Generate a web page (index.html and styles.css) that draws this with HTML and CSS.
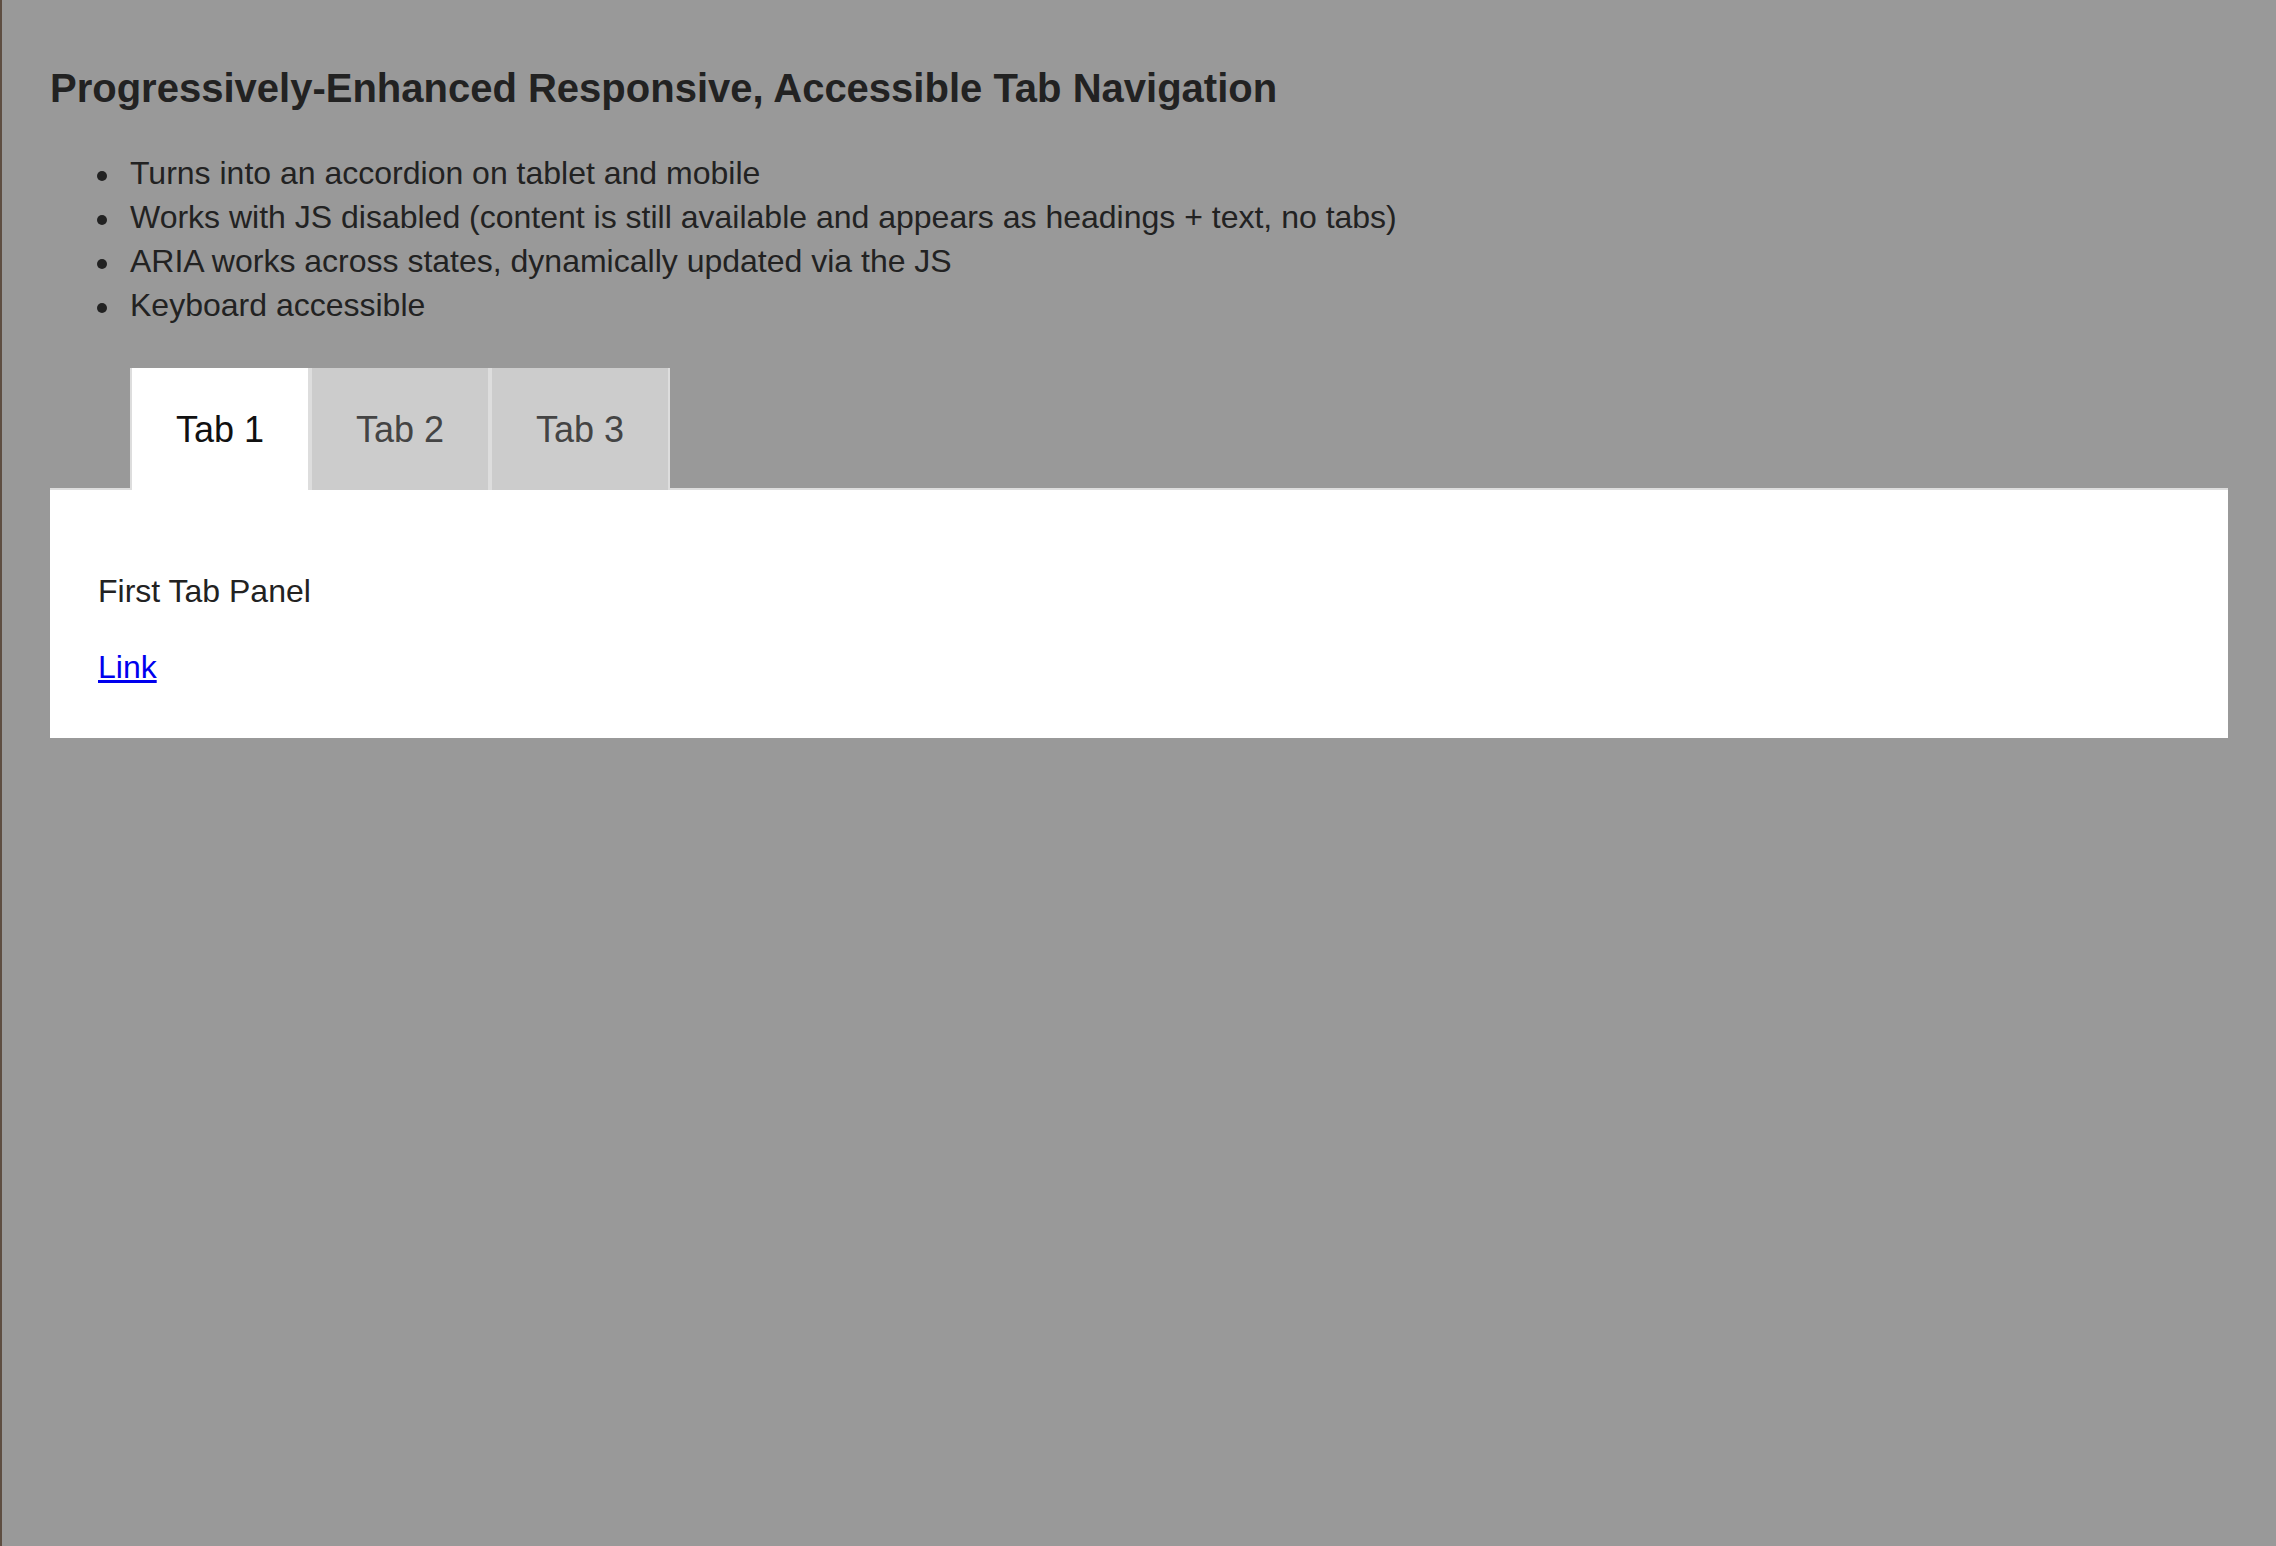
FILE: index.html
```html
<!DOCTYPE html>
<html lang="en">
<head>
<meta charset="utf-8">
<title>Progressively-Enhanced Responsive, Accessible Tab Navigation</title>
<link rel="stylesheet" href="styles.css">
</head>
<body class="page">
<main class="wrap">
  <h1 class="title">Progressively-Enhanced Responsive, Accessible Tab Navigation</h1>
  <ul class="features">
    <li class="feature">Turns into an accordion on tablet and mobile</li>
    <li class="feature">Works with JS disabled (content is still available and appears as headings + text, no tabs)</li>
    <li class="feature">ARIA works across states, dynamically updated via the JS</li>
    <li class="feature">Keyboard accessible</li>
  </ul>
  <div class="tabs">
    <div class="tablist" role="tablist">
      <a class="tab is-active" role="tab" aria-selected="true" href="#tab1">Tab 1</a>
      <a class="tab" role="tab" aria-selected="false" href="#tab2">Tab 2</a>
      <a class="tab" role="tab" aria-selected="false" href="#tab3">Tab 3</a>
    </div>
    <section class="panel" id="tab1" role="tabpanel">
      <p class="panel-text">First Tab Panel</p>
      <p class="panel-text"><a class="link" href="#">Link</a></p>
    </section>
  </div>
</main>
</body>
</html>
```

FILE: styles.css
```css
html, body {
  margin: 0;
  padding: 0;
}

.page {
  min-height: 1546px;
  box-sizing: border-box;
  background: #999999;
  border-left: 2px solid #5e4e42;
  font-family: "Liberation Sans", Arial, Helvetica, sans-serif;
  color: #222222;
}

.wrap {
  padding: 65px 48px 0 48px;
}

.title {
  margin: 0;
  font-size: 40px;
  line-height: 46px;
  font-weight: bold;
  color: #222222;
}

.features {
  margin: 40px 0 0 0;
  padding-left: 80px;
  list-style: none;
  font-size: 32px;
  line-height: 44px;
  color: #222222;
}

.feature::before {
  content: "";
  display: inline-block;
  width: 10px;
  height: 10px;
  border-radius: 50%;
  background: #222222;
  margin-left: -33px;
  margin-right: 23px;
  vertical-align: 3px;
}

.tabs {
  margin-top: 41px;
}

.tablist {
  display: flex;
  padding-left: 80px;
}

.tab {
  position: relative;
  z-index: 1;
  display: block;
  width: 176px;
  box-sizing: content-box;
  padding: 41px 0 39px 0;
  margin-bottom: -2px;
  border-left: 2px solid #dddddd;
  border-right: 2px solid #dddddd;
  background: #cccccc;
  color: #444444;
  font-size: 36px;
  line-height: 42px;
  text-align: center;
  text-decoration: none;
}

.tab.is-active {
  background: #ffffff;
  color: #111111;
}

.panel {
  display: flex;
  flex-direction: column;
  gap: 32px;
  background: #ffffff;
  border-top: 2px solid #dddddd;
  padding: 79px 48px 49px 48px;
}

.panel-text {
  margin: 0;
  font-size: 32px;
  line-height: 44px;
  color: #222222;
}

.link {
  color: #0000ee;
  text-decoration: underline;
}
```
